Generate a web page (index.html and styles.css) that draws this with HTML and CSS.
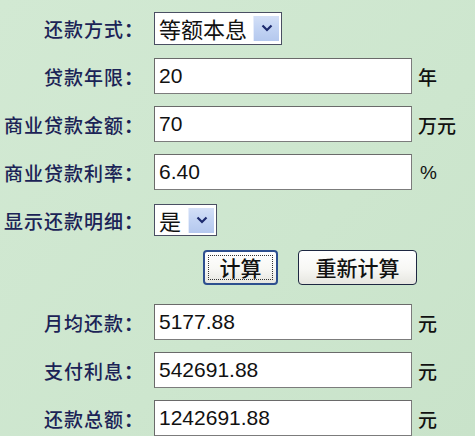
FILE: index.html
```html
<!DOCTYPE html>
<html lang="zh-CN">
<head>
<meta charset="utf-8">
<title>房贷计算器</title>
<link rel="stylesheet" href="styles.css">
</head>
<body>
<div class="calc">
  <div class="row">
    <span class="label">还款方式<span class="colon">：</span></span>
    <div class="select select-wide"><span class="sel-text">等额本息</span><span class="sel-btn"><svg width="12" height="8" viewBox="0 0 12 8"><path d="M1.5 1.5 L6 6 L10.5 1.5" fill="none" stroke="#1c2a6e" stroke-width="2.2"/></svg></span></div>
  </div>
  <div class="row">
    <span class="label">贷款年限<span class="colon">：</span></span>
    <input class="field" type="text" value="20">
    <span class="unit">年</span>
  </div>
  <div class="row">
    <span class="label">商业贷款金额<span class="colon">：</span></span>
    <input class="field" type="text" value="70">
    <span class="unit">万元</span>
  </div>
  <div class="row">
    <span class="label">商业贷款利率<span class="colon">：</span></span>
    <input class="field" type="text" value="6.40">
    <span class="unit unit-pct">%</span>
  </div>
  <div class="row">
    <span class="label">显示还款明细<span class="colon">：</span></span>
    <div class="select select-narrow"><span class="sel-text">是</span><span class="sel-btn"><svg width="12" height="8" viewBox="0 0 12 8"><path d="M1.5 1.5 L6 6 L10.5 1.5" fill="none" stroke="#1c2a6e" stroke-width="2.2"/></svg></span></div>
  </div>
  <div class="row row-buttons">
    <span class="label"></span>
    <div class="buttons">
      <button class="btn btn-focus" type="button"><span class="focus-ring">计算</span></button>
      <button class="btn" type="button">重新计算</button>
    </div>
  </div>
  <div class="row">
    <span class="label">月均还款<span class="colon">：</span></span>
    <input class="field" type="text" value="5177.88">
    <span class="unit">元</span>
  </div>
  <div class="row">
    <span class="label">支付利息<span class="colon">：</span></span>
    <input class="field" type="text" value="542691.88">
    <span class="unit">元</span>
  </div>
  <div class="row">
    <span class="label">还款总额<span class="colon">：</span></span>
    <input class="field" type="text" value="1242691.88">
    <span class="unit">元</span>
  </div>
</div>
</body>
</html>
```

FILE: styles.css
```css
html, body {
  margin: 0;
  padding: 0;
}
body {
  width: 475px;
  height: 436px;
  overflow: hidden;
  background: linear-gradient(135deg, #d2e9d3 0%, #cde6ce 60%, #c9e3ca 100%);
  font-family: "Noto Sans CJK SC", "Noto Sans", sans-serif;
}
.calc {
  display: flex;
  flex-direction: column;
  gap: 12px;
  padding-top: 10px;
}
.row {
  display: flex;
  align-items: center;
  height: 36px;
}
.row-buttons {
  height: 35px;
  margin-bottom: 7px;
}
.label {
  width: 144px;
  flex: none;
  text-align: right;
  font-size: 19px;
  font-weight: 500;
  letter-spacing: 1px;
  color: #1b2356;
  margin-right: 10px;
  line-height: 1;
  white-space: nowrap;
}
.colon {
  font-family: "Noto Sans CJK TC", "Noto Sans CJK SC", sans-serif;
  font-weight: 700;
}
.field {
  box-sizing: border-box;
  width: 258px;
  height: 36px;
  margin: 0;
  padding: 0 0 0 4px;
  border: 1px solid #7c7c7c;
  border-top-color: #6a6a6a;
  border-left-color: #6a6a6a;
  background: #fff;
  font-family: "Liberation Sans", Arial, sans-serif;
  font-size: 21px;
  color: #111;
  outline: none;
}
.unit {
  margin-left: 6px;
  font-size: 19px;
  font-weight: 500;
  color: #111;
  line-height: 1;
}
.unit-pct {
  font-family: "Liberation Sans", Arial, sans-serif;
  font-weight: 400;
  margin-left: 8px;
}
.select {
  box-sizing: border-box;
  display: flex;
  align-items: center;
  justify-content: space-between;
  background: #fff;
  border: 1px solid #4a4f63;
  padding: 0 2px 0 4px;
}
.select-wide {
  width: 128px;
  height: 33px;
}
.select-narrow {
  width: 63px;
  height: 32px;
}
.sel-text {
  font-size: 22px;
  color: #111;
  line-height: 1;
}
.sel-btn {
  width: 25px;
  height: 25px;
  display: flex;
  align-items: center;
  justify-content: center;
  background: linear-gradient(180deg, #d4e0f7 0%, #c2d3f3 50%, #b4c8ee 100%);
  border-left: 1px solid #e6edfb;
}
.buttons {
  display: flex;
  gap: 20px;
  padding-left: 49px;
}
.btn {
  box-sizing: border-box;
  height: 35px;
  margin: 0;
  padding: 0;
  border: 1.5px solid #1d2741;
  border-radius: 4px;
  background: linear-gradient(180deg, #ffffff 0%, #f7f7f4 55%, #e6e6e0 100%);
  font-family: "Noto Sans CJK SC", sans-serif;
  font-size: 21px;
  font-weight: 500;
  color: #111;
  line-height: 1;
  display: flex;
  align-items: center;
  justify-content: center;
}
.btn:first-child {
  width: 75px;
}
.btn:last-child {
  width: 119px;
}
.btn-focus {
  border: 2px solid #2d4f8f;
  padding: 3px;
}
.focus-ring {
  box-sizing: border-box;
  width: 100%;
  height: 100%;
  border: 1px dotted #333;
  display: flex;
  align-items: center;
  justify-content: center;
}
```
